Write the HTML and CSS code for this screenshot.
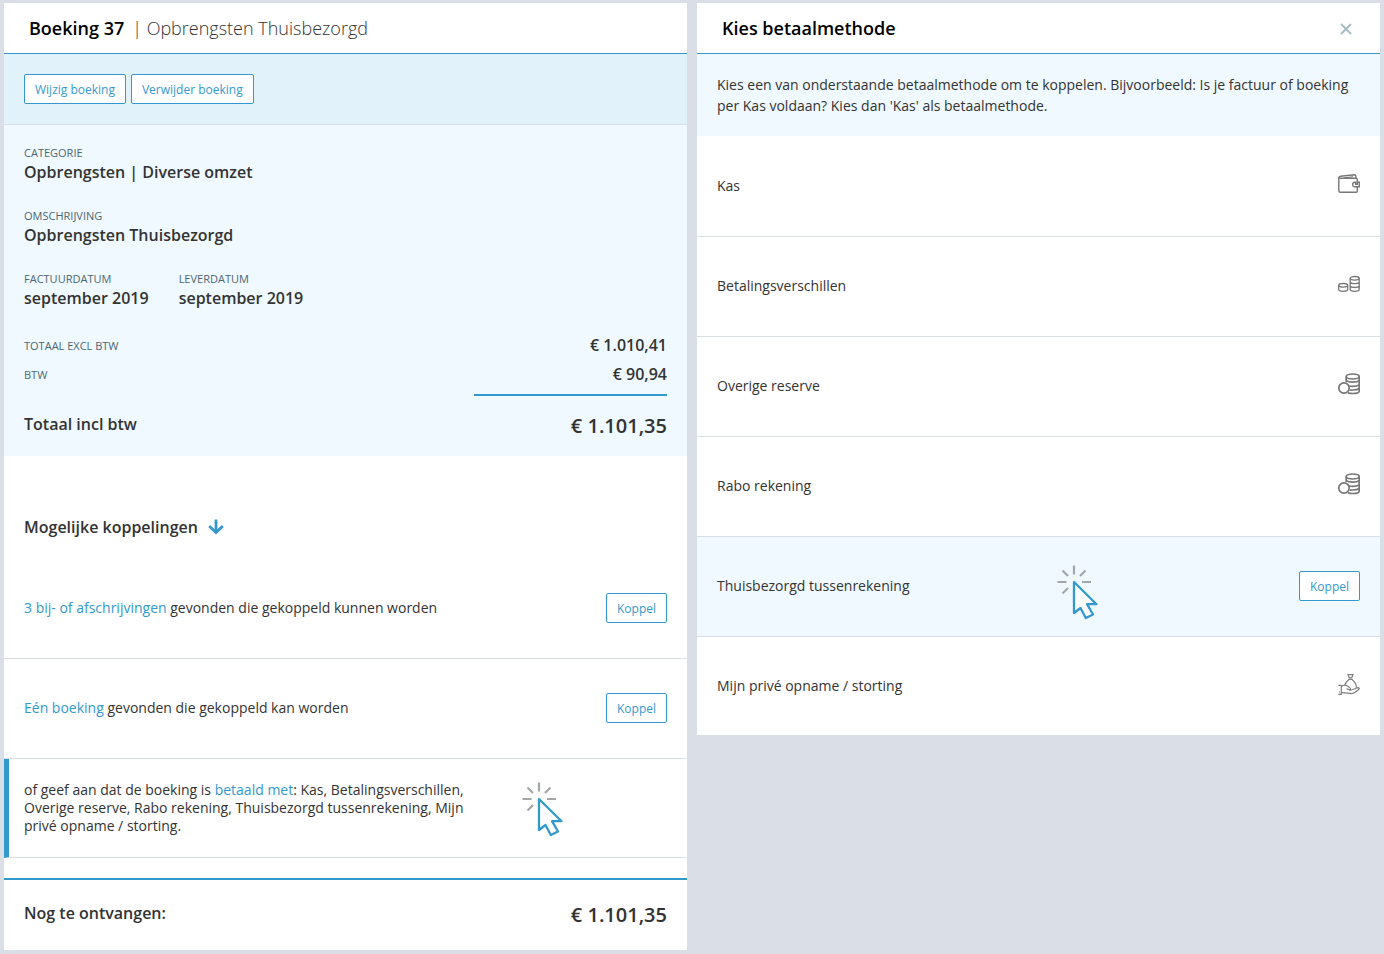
FILE: index.html
```html
<!DOCTYPE html>
<html lang="nl">
<head>
<meta charset="utf-8">
<title>Boeking 37</title>
<link rel="stylesheet" href="styles.css">
</head>
<body>
<svg class="defs" aria-hidden="true">
  <symbol id="click" viewBox="0 0 42 56">
    <g fill="none" stroke="#a3a7a8" stroke-width="2.2">
      <path d="M17 .5v9M.5 17h9M25 17h9M5.500 5.500l5.500 5.500M28.500 5.500l-5.500 5.500M5.500 28.500l5.500-5.500"/>
    </g>
    <path d="M17 17v31l6.500-5 5.300 10L36 49.500l-6-10.300h9.500z" fill="#fff" stroke="#3399cc" stroke-width="2.3" stroke-linejoin="round"/>
  </symbol>
  <symbol id="stack" viewBox="0 0 22 22">
    <g fill="none" stroke="#777" stroke-width="1.700">
      <path d="M8.200 9V3.500M21.200 3.500v14.800c0 1.500-3 2.200-6.500 2.200-2 0-3.600-.2-4.800-.6"/>
      <ellipse cx="14.700" cy="3.500" rx="6.500" ry="2.500"/>
      <path d="M8.200 7.500c1.300 1.200 3.600 1.700 6.500 1.700s5.200-.5 6.500-1.700M10.500 13c1.200.2 2.500.3 4.200.3 2.900 0 5.200-.5 6.500-1.500M11.500 17c1 .1 2 .1 3.200 0 2.900-.1 5.200-.5 6.500-1.500"/>
      <circle cx="6" cy="15" r="5.200" fill="#fff"/>
    </g>
  </symbol>
</svg>
<main class="page">
  <section class="panel">
    <header class="panel-header">
      <h1 class="title">Boeking 37</h1>
      <span class="subtitle">| Opbrengsten Thuisbezorgd</span>
    </header>
    <div class="actions">
      <button class="btn" type="button">Wijzig boeking</button>
      <button class="btn" type="button">Verwijder boeking</button>
    </div>
    <div class="details">
      <dl class="fields">
        <div class="field wide"><dt class="label">CATEGORIE</dt><dd class="value">Opbrengsten | Diverse omzet</dd></div>
        <div class="field wide"><dt class="label">OMSCHRIJVING</dt><dd class="value">Opbrengsten Thuisbezorgd</dd></div>
        <div class="field"><dt class="label">FACTUURDATUM</dt><dd class="value">september 2019</dd></div>
        <div class="field"><dt class="label">LEVERDATUM</dt><dd class="value">september 2019</dd></div>
      </dl>
      <dl class="amounts">
        <div class="amount"><dt class="label">TOTAAL EXCL BTW</dt><dd class="value">€ 1.010,41</dd></div>
        <div class="amount"><dt class="label">BTW</dt><dd class="value">€ 90,94</dd></div>
        <div class="rule"></div>
        <div class="total"><dt class="value">Totaal incl btw</dt><dd class="sum">€ 1.101,35</dd></div>
      </dl>
    </div>
    <h2 class="links-title">Mogelijke koppelingen
      <svg class="arrow" viewBox="0 0 16 16"><path d="M8 .5v13M1.200 7L8 13.500 14.800 7" fill="none" stroke="#3399cc" stroke-width="2.800"/></svg>
    </h2>
    <ul class="rows">
      <li class="row"><p class="text"><a class="link" href="#">3 bij- of afschrijvingen</a> gevonden die gekoppeld kunnen worden</p><button class="btn" type="button">Koppel</button></li>
      <li class="row"><p class="text"><a class="link" href="#">Eén boeking</a> gevonden die gekoppeld kan worden</p><button class="btn" type="button">Koppel</button></li>
      <li class="row marked"><p class="text note">of geef aan dat de boeking is <a class="link" href="#">betaald met</a>: Kas, Betalingsverschillen, Overige reserve, Rabo rekening, Thuisbezorgd tussenrekening, Mijn privé opname / storting.</p><svg class="pointer pointer-note"><use href="#click"/></svg></li>
    </ul>
    <footer class="total due"><span class="value">Nog te ontvangen:</span><span class="sum">€ 1.101,35</span></footer>
  </section>

  <section class="panel">
    <header class="panel-header">
      <h1 class="title">Kies betaalmethode</h1>
      <button class="close" type="button" aria-label="Sluiten"><svg class="close-icon" viewBox="0 0 12 12"><path d="M1 1l10 10M11 1L1 11" stroke="#a9bcc4" stroke-width="2"/></svg></button>
    </header>
    <p class="intro">Kies een van onderstaande betaalmethode om te koppelen. Bijvoorbeeld: Is je factuur of boeking per Kas voldaan? Kies dan 'Kas' als betaalmethode.</p>
    <ul class="rows methods">
      <li class="row"><span class="text">Kas</span>
        <svg class="icon" viewBox="0 0 22 22"><g fill="none" stroke="#777" stroke-width="1.400"><path d="M19.300 9V6.500c0-.8-.5-1.200-1.200-1.200H2.500C1.200 5.300.8 4.600.8 4v13.500c0 1.200.6 1.800 1.800 1.800h15.500c.8 0 1.200-.5 1.200-1.200V14"/><path d="M1 4.200c.2-.7.700-1 1.500-1l13.800-1.500c1.200 0 1.500.6 1.500 1.500v2"/><path d="M6 5l9-1.300" stroke-width="1"/><path d="M21.300 9.300v4.400h-4.600c-1.300 0-2-.9-2-2.200s.7-2.200 2-2.200h1v2h1.600v-2z"/></g></svg></li>
      <li class="row"><span class="text">Betalingsverschillen</span>
        <svg class="icon" viewBox="0 0 22 22"><g fill="none" stroke="#777" stroke-width="1.300"><ellipse cx="16.700" cy="5.300" rx="4.500" ry="1.800"/><path d="M12.200 5.300v11.200c0 1.200 2 1.800 4.500 1.800s4.500-.6 4.500-1.800V5.300M12.200 9.300c.8 1 2.400 1.300 4.500 1.300s3.700-.3 4.500-1.300M12.200 13.200c.8 1 2.400 1.300 4.500 1.300s3.700-.3 4.500-1.300"/><ellipse cx="5.200" cy="12.300" rx="4.500" ry="1.800"/><path d="M.7 12.300v4.200c0 1.200 2 1.800 4.500 1.800s4.500-.6 4.500-1.800v-4.200"/></g></svg></li>
      <li class="row"><span class="text">Overige reserve</span><svg class="icon"><use href="#stack"/></svg></li>
      <li class="row"><span class="text">Rabo rekening</span><svg class="icon"><use href="#stack"/></svg></li>
      <li class="row active"><span class="text">Thuisbezorgd tussenrekening</span><svg class="pointer pointer-method"><use href="#click"/></svg><button class="btn" type="button">Koppel</button></li>
      <li class="row"><span class="text">Mijn privé opname / storting</span>
        <svg class="icon" viewBox="0 0 22 22"><g fill="none" stroke="#808080" stroke-width="1.200"><path d="M10 .7h5l-1.200 3h-2.600zM10.500 5.300h4"/><path d="M11 5.500c-2 1.500-3.500 3-4.300 5.500M14 5.500c2.500 2 4.500 4.200 4.500 8.200"/><path d="M.3 11.300h3v9h-3M1 18h1"/><path d="M3.500 12.500c2-1.800 4.500-1.500 6.200-.3l2.200 1.700c1.200 1 .4 1.900-.9 1.600l-2.500-.7M11 16c4 .5 6.500-2 9-2.300 1.300 0 1.700.8.900 1.600-2.400 2.200-4.400 4.300-7.600 4.300-3.300 0-6-1.200-9.800-.9"/></g></svg></li>
    </ul>
  </section>
</main>
</body>
</html>
```

FILE: styles.css
```css
* { box-sizing: border-box; }
body { margin: 0; background: #d9dee7; color: #333; font-family: "Open Sans", "Noto Sans", sans-serif; font-size: 14px; }
h1, h2, p, dl, dd, ul { margin: 0; padding: 0; }
ul { list-style: none; }
.defs { display: none; }
.page { display: grid; grid-template-columns: 1fr 1fr; align-items: start; gap: 10px; padding: 3px 4px 4px; }
.panel { background: #fff; }
.panel-header { display: flex; align-items: center; gap: 8px; min-height: 51px; padding: 0 25px; border-bottom: 1px solid #3399cc; font-size: 18px; line-height: 24px; }
.title { font-size: 18px; font-weight: 600; color: #000; }
.subtitle { font-weight: 300; }
.close { display: flex; margin-left: auto; padding: 4px 3px 2px; border: 0; background: none; }
.close-icon { width: 12px; height: 12px; }
.actions { display: flex; gap: 5px; padding: 20px; background: #e1f2fb; border-bottom: 1px solid #d9dee7; }
.btn { flex: none; height: 30px; padding: 2px 10px 0; border: 1px solid #3399cc; border-radius: 2px; background: #fff; color: #3399cc; font: 12px/26px "Open Sans", "Noto Sans", sans-serif; }
.details { padding: 20px 20px 0; background: #f0f9ff; }
.fields { display: flex; flex-wrap: wrap; gap: 25px 30px; }
.wide { flex-basis: 100%; }
.label { font-size: 11px; line-height: 16px; color: #4d6673; }
.value { font-size: 16px; line-height: 22px; font-weight: 600; }
.amounts { padding-top: 22px; }
.amount { display: flex; align-items: center; justify-content: space-between; min-height: 29px; }
.amount .value { padding-bottom: 2px; }
.rule { width: 30%; margin: 5px 0 0 auto; border-top: 2px solid #3399cc; }
.total { display: flex; align-items: center; justify-content: space-between; min-height: 60px; }
.total .value { padding-bottom: 4px; }
.sum { font-size: 20px; line-height: 28px; font-weight: 600; }
.links-title { display: flex; align-items: center; gap: 10px; padding: 60px 20px 21px; font-size: 16px; line-height: 22px; font-weight: 600; }
.arrow { width: 16px; height: 16px; }
.row { position: relative; display: flex; align-items: center; justify-content: space-between; min-height: 100px; padding: 0 20px 2px; border-bottom: 1px solid #d9dee7; }
.text { line-height: 18px; }
.link { color: #3399cc; text-decoration: none; }
.note { max-width: 450px; }
.marked { min-height: 99px; padding: 0 20px 0 15px; border-left: 5px solid #3399cc; }
.pointer { position: absolute; width: 42px; height: 56px; }
.pointer-note { left: 513px; top: 23px; }
.pointer-method { left: 360px; top: 28px; }
.due { min-height: 72px; margin-top: 20px; padding: 0 20px; border-top: 2px solid #3399cc; }
.intro { padding: 20px; background: #f0f9ff; line-height: 21px; }
.methods { padding-top: 1px; }
.methods .row:last-child { min-height: 98px; padding-bottom: 0; border-bottom: 0; }
.active { background: #f0f9ff; }
.icon { width: 22px; height: 22px; margin-bottom: 3px; }
```
